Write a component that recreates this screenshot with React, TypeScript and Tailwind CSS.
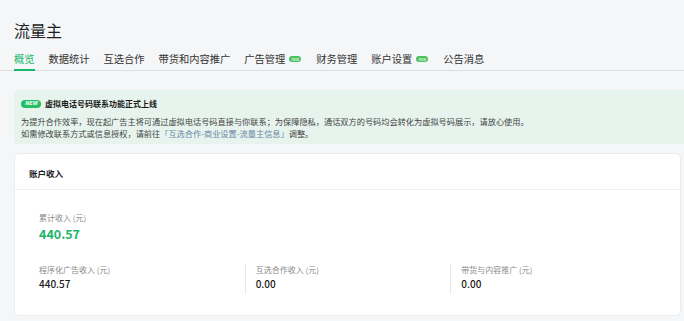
const tabs = [
  { label: '概览', active: true },
  { label: '数据统计' },
  { label: '互选合作' },
  { label: '带货和内容推广' },
  { label: '广告管理', badge: true },
  { label: '财务管理' },
  { label: '账户设置', badge: true },
  { label: '公告消息' },
];

const incomes = [
  { label: '程序化广告收入 (元)', value: '440.57' },
  { label: '互选合作收入 (元)', value: '0.00' },
  { label: '带货与内容推广 (元)', value: '0.00' },
];

export default function App() {
  return (
    <div
      className="h-[321px] w-[684px] overflow-hidden bg-[#f5f6f8] text-[#222]"
      style={{ fontFamily: '"Noto Sans CJK SC", "Noto Sans", sans-serif' }}
    >
      <div className="pl-[14px] pt-[20px]">
        <h1 className="text-[16px] leading-[20px] font-normal text-[#1f1f1f]">流量主</h1>
      </div>

      {/* tabs */}
      <div className="mt-[12px] flex gap-[14px] border-b border-[#dcdee2] pl-[14px]">
        {tabs.map((tab) => (
          <div
            key={tab.label}
            className={`-mb-px flex items-center border-b-2 pb-[3px] text-[10.25px] leading-[14px] ${
              tab.active ? 'border-[#15b86a] text-[#15b86a]' : 'border-transparent text-[#333]'
            }`}
          >
            <span>{tab.label}</span>
            {tab.badge && (
              <span className="ml-[4px] mr-[1px] flex h-[6px] w-[12px] items-center justify-center rounded-full bg-[#4cc05e] text-[4px] leading-none text-white">
                new
              </span>
            )}
          </div>
        ))}
      </div>

      {/* notice */}
      <div className="ml-[14px] mt-[19px] rounded-l-[4px] bg-[#e7f4ee] pb-[5px] pl-[7px] pt-[8px]">
        <div className="flex items-center gap-[4px]">
          <span className="flex h-[8px] w-[20px] items-center justify-center rounded-full bg-[#22bf66] text-[5.5px] font-bold italic leading-none text-white">
            NEW
          </span>
          <span className="text-[8px] font-bold leading-[12px] text-[#1a1a1a]">虚拟电话号码联系功能正式上线</span>
        </div>
        <p className="mt-[5px] text-[8.2px] leading-[12px] text-[#444]">
          为提升合作效率，现在起广告主将可通过虚拟电话号码直接与你联系；为保障隐私，通话双方的号码均会转化为虚拟号码展示，请放心使用。
        </p>
        <p className="text-[8.2px] leading-[12px] text-[#444]">
          如需修改联系方式或信息授权，请前往<span className="text-[#6a86a6]">「互选合作-商业设置-流量主信息」</span>调整。
        </p>
      </div>

      {/* income card */}
      <div className="ml-[14px] mr-[3px] mt-[9px] rounded-[5px] border border-[#ebedf0] bg-white">
        <div className="h-[36px] border-b border-[#f0f1f3] pl-[14px] pt-[13px]">
          <h2 className="text-[8.5px] font-bold leading-[12px] text-[#1a1a1a]">账户收入</h2>
        </div>
        <div className="px-[24px] pb-[21px] pt-[22px]">
          <p className="text-[8px] leading-[12px] text-[#8a8a8a]">累计收入 (元)</p>
          <p className="mt-[2px] text-[12.5px] font-bold leading-[16px] text-[#1db46a]">440.57</p>
          <div className="mt-[22px] grid grid-cols-3">
            {incomes.map((item, i) => (
              <div
                key={item.label}
                className={`h-[30px] ${i > 0 ? 'border-l border-[#e6e7ea] pl-[10px]' : ''}`}
              >
                <p className="text-[8px] leading-[12px] text-[#8a8a8a]">{item.label}</p>
                <p className="mt-[1px] text-[10px] font-medium leading-[14px] text-[#1a1a1a]">{item.value}</p>
              </div>
            ))}
          </div>
        </div>
      </div>
    </div>
  );
}
